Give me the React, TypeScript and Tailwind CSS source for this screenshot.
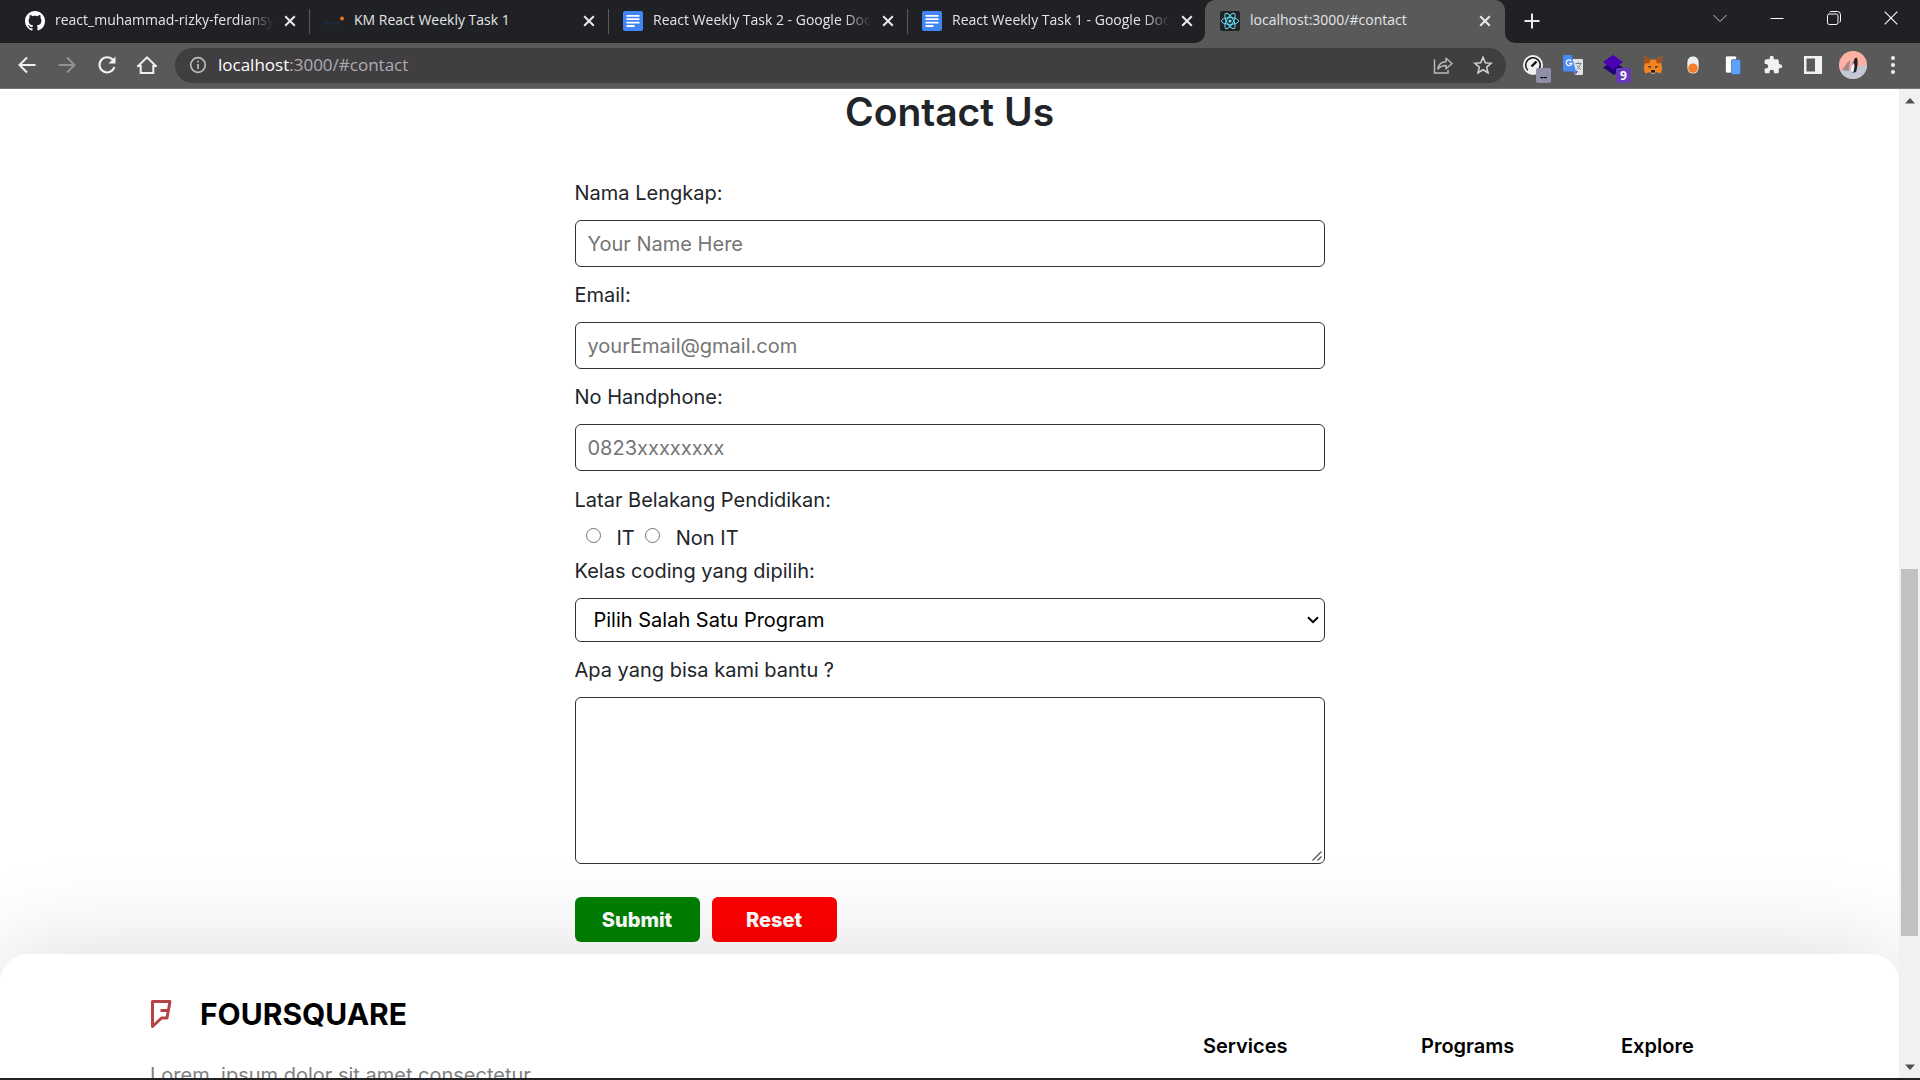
import type { ReactNode } from "react";

function GithubIcon() {
  return (
    <svg viewBox="0 0 16 16" className="size-5 shrink-0" fill="#fff" aria-hidden="true">
      <path d="M8 0C3.58 0 0 3.58 0 8c0 3.54 2.29 6.53 5.47 7.59.4.07.55-.17.55-.38 0-.19-.01-.82-.01-1.49-2.01.37-2.53-.49-2.69-.94-.09-.23-.48-.94-.82-1.13-.28-.15-.68-.52-.01-.53.63-.01 1.08.58 1.23.82.72 1.21 1.87.87 2.33.66.07-.52.28-.87.51-1.07-1.78-.2-3.64-.89-3.64-3.95 0-.87.31-1.59.82-2.15-.08-.2-.36-1.02.08-2.12 0 0 .67-.21 2.2.82.64-.18 1.32-.27 2-.27s1.36.09 2 .27c1.53-1.04 2.2-.82 2.2-.82.44 1.1.16 1.92.08 2.12.51.56.82 1.27.82 2.15 0 3.07-1.87 3.75-3.65 3.95.29.25.54.73.54 1.48 0 1.07-.01 1.93-.01 2.2 0 .21.15.46.55.38A8.01 8.01 0 0 0 16 8c0-4.42-3.58-8-8-8z" />
    </svg>
  );
}

function CampusIcon() {
  return (
    <svg viewBox="0 0 20 20" className="size-5 shrink-0" aria-hidden="true">
      <path d="M0 11.5h16M1 13h13" stroke="#1b2f55" strokeWidth="1.2" strokeDasharray="2 .6" />
      <circle cx="18" cy="7.6" r="2" fill="#f36f21" />
    </svg>
  );
}

function DocsIcon() {
  return (
    <svg viewBox="0 0 20 20" className="size-5 shrink-0" aria-hidden="true">
      <rect width="20" height="20" rx="2" fill="#4285f4" />
      <path d="M3.5 4.8h13M3.5 8.2h13M3.5 11.6h13M3.5 15h8" stroke="#fff" strokeWidth="1.8" />
    </svg>
  );
}

function ReactIcon() {
  return (
    <svg viewBox="0 0 20 20" className="size-5 shrink-0" aria-hidden="true">
      <rect width="20" height="20" rx="2" fill="#222" />
      <circle cx="10" cy="10" r="1.6" fill="#61dafb" />
      <g fill="none" stroke="#61dafb" strokeWidth="1">
        <ellipse cx="10" cy="10" rx="8.6" ry="3.4" />
        <ellipse cx="10" cy="10" rx="8.6" ry="3.4" transform="rotate(60 10 10)" />
        <ellipse cx="10" cy="10" rx="8.6" ry="3.4" transform="rotate(120 10 10)" />
      </g>
    </svg>
  );
}

type TabProps = { icon: ReactNode; title: string; active?: boolean; divider?: boolean; fade?: boolean };

function Tab({ icon, title, active, divider, fade }: TabProps) {
  return (
    <div
      className={
        active
          ? "relative -ml-0.5 flex h-full w-[300px] min-w-0 items-center rounded-t-[10px] bg-[#595959] pr-[14px] pb-px pl-[15px]"
          : "relative flex h-full w-[299px] min-w-0 items-center pr-[14px] pb-px pl-[14px]"
      }
    >
      {icon}
      <span
        className={
          fade
            ? "ml-[10px] min-w-0 flex-1 overflow-hidden pb-0.5 whitespace-nowrap [mask-image:linear-gradient(to_right,#000_88%,transparent)]"
            : "ml-[10px] min-w-0 flex-1 overflow-hidden pb-0.5 whitespace-nowrap"
        }
      >
        {title}
      </span>
      <button type="button" aria-label={`Close ${title}`} className="ml-[10px] flex w-[13px] justify-center">
        <svg viewBox="0 0 12 12" className="size-3" stroke="#e8eaed" strokeWidth="2" aria-hidden="true">
          <path d="M1.2 1.2l9.6 9.6M10.8 1.2L1.2 10.8" />
        </svg>
      </button>
      {divider && <span className="absolute top-[9px] right-0 h-[25px] w-px bg-[#5a5b5e]" />}
      {active && (
        <>
          <svg viewBox="0 0 10 10" className="absolute bottom-0 -left-[10px] size-[10px]" fill="#595959" aria-hidden="true">
            <path d="M10 0v10H0A10 10 0 0 0 10 0z" />
          </svg>
          <svg viewBox="0 0 10 10" className="absolute -right-[10px] bottom-0 size-[10px]" fill="#595959" aria-hidden="true">
            <path d="M0 0v10h10A10 10 0 0 1 0 0z" />
          </svg>
        </>
      )}
    </div>
  );
}

function TabStrip() {
  return (
    <div className="flex h-[43px] items-stretch bg-[#202124] pl-[11px] text-sm leading-5 text-[#e3e5e8]">
      <Tab icon={<GithubIcon />} title="react_muhammad-rizky-ferdiansyah" divider fade />
      <Tab icon={<CampusIcon />} title="KM React Weekly Task 1" divider />
      <Tab icon={<DocsIcon />} title="React Weekly Task 2 - Google Docs" divider fade />
      <Tab icon={<DocsIcon />} title="React Weekly Task 1 - Google Docs" fade />
      <Tab icon={<ReactIcon />} title="localhost:3000/#contact" active />
      <button type="button" aria-label="New tab" className="ml-[18px] flex w-[18px] items-center justify-center pb-px">
        <svg viewBox="0 0 16 16" className="size-4" stroke="#e8eaed" strokeWidth="2" aria-hidden="true">
          <path d="M8 .5v15M.5 8h15" />
        </svg>
      </button>
      <div className="ml-auto flex h-9 shrink-0 items-center pr-px">
        <button type="button" aria-label="Search tabs" className="flex w-[57px] justify-center">
          <svg viewBox="0 0 14 14" className="size-[14px]" stroke="#c9cacc" fill="none" aria-hidden="true">
            <path d="M.5 4L7 10.5 13.5 4" />
          </svg>
        </button>
        <button type="button" aria-label="Minimize" className="flex w-[57px] justify-center">
          <svg viewBox="0 0 14 14" className="size-[14px]" stroke="#fff" fill="none" aria-hidden="true">
            <path d="M.5 7.5h13" />
          </svg>
        </button>
        <button type="button" aria-label="Restore" className="flex w-[57px] justify-center">
          <svg viewBox="0 0 14 14" className="size-[14px]" stroke="#fff" fill="none" aria-hidden="true">
            <rect x=".5" y="3" width="10.5" height="10.5" rx="1.8" />
            <path d="M2.5 1.2c.4-.5 1-.7 1.6-.7h6.2a3.2 3.2 0 0 1 3.2 3.2v6.2c0 .7-.3 1.3-.8 1.6" />
          </svg>
        </button>
        <button type="button" aria-label="Close window" className="flex w-[57px] justify-center">
          <svg viewBox="0 0 14 14" className="size-[14px]" stroke="#fff" strokeWidth="1.1" fill="none" aria-hidden="true">
            <path d="M.7.7l12.6 12.6M13.3.7L.7 13.3" />
          </svg>
        </button>
      </div>
    </div>
  );
}

function ToolButton({ label, children }: { label: string; children: ReactNode }) {
  return (
    <button type="button" aria-label={label} className="relative flex w-10 shrink-0 items-center justify-center">
      {children}
    </button>
  );
}

function Toolbar() {
  return (
    <div className="flex h-[46px] items-center border-b border-[#757575] bg-[#595959] pb-px pl-[7px]">
      <ToolButton label="Back">
        <svg viewBox="0 0 20 20" className="size-5" stroke="#f1f1f1" strokeWidth="2" fill="none">
          <path d="M18.5 10H3M10 2.5L2.5 10l7.5 7.5" />
        </svg>
      </ToolButton>
      <ToolButton label="Forward">
        <svg viewBox="0 0 20 20" className="size-5" stroke="#929292" strokeWidth="2" fill="none">
          <path d="M1.5 10H17M10 2.5l7.5 7.5-7.5 7.5" />
        </svg>
      </ToolButton>
      <ToolButton label="Reload">
        <svg viewBox="0 0 20 20" className="size-5" stroke="#f1f1f1" strokeWidth="2.1" fill="none">
          <path d="M16 5A7.6 7.6 0 1 0 17.4 12" />
          <path d="M18.5 1.5v7h-7z" fill="#f1f1f1" stroke="none" />
        </svg>
      </ToolButton>
      <ToolButton label="Home">
        <svg viewBox="0 0 20 20" className="size-5" stroke="#f1f1f1" strokeWidth="2" fill="none">
          <path d="M1.2 11L10 2.4l8.8 8.6h-2.5v7H3.7v-7z" />
        </svg>
      </ToolButton>
      <div className="ml-2 flex h-[35px] min-w-0 flex-1 items-center rounded-full bg-[#403e41] pr-[13px] pl-[14px]">
        <svg viewBox="0 0 18 18" className="size-[18px] shrink-0" stroke="#b9b9bb" strokeWidth="1.7" fill="none" aria-hidden="true">
          <circle cx="9" cy="9" r="7.3" />
          <path d="M9 8v5M9 4.8v1.8" />
        </svg>
        <span className="ml-[11px] flex-1 text-[17px] leading-6 whitespace-nowrap text-[#adadaf]">
          <span className="text-white">localhost</span>:3000/#contact
        </span>
        <button type="button" aria-label="Share" className="mr-5">
          <svg viewBox="0 0 20 20" className="size-5" stroke="#b9b9bb" strokeWidth="1.5" fill="none">
            <path d="M1.5 4.500v13.500h13.500V15" />
            <path d="M5 14c.4-4.5 3-7 8-7.2V3.200L19 8.500l-6 5.200V10.500c-3.600 0-6 1.200-8 3.500z" strokeLinejoin="round" />
          </svg>
        </button>
        <button type="button" aria-label="Bookmark">
          <svg viewBox="0 0 20 20" className="size-5" stroke="#cfcfd1" strokeWidth="1.6" fill="none">
            <path d="M10 2.4l2.3 5.4 5.8.5-4.4 3.8 1.3 5.700-5-3-5 3 1.300-5.700L1.900 8.300l5.800-.5z" />
          </svg>
        </button>
      </div>
      <div className="ml-[7px] flex shrink-0 items-center pr-[7px]">
        <ToolButton label="Performance monitor">
          <svg viewBox="0 0 28 28" className="size-7">
            <circle cx="14" cy="14" r="10" fill="#f1f1f1" />
            <path d="M8.8 19.2a7.300 7.300 0 1 1 11.200-1" fill="none" stroke="#111" strokeWidth="1.5" />
            <path d="M12.500 15.500l5-5" stroke="#111" strokeWidth="2.400" />
          </svg>
          <span className="absolute top-[17px] left-[23px] flex h-[15px] w-[15px] items-center justify-center rounded-[2px] bg-[#8f90a8] text-[11px] leading-3 font-bold text-black">
            --
          </span>
        </ToolButton>
        <ToolButton label="Translate">
          <svg viewBox="0 0 20 20" className="size-5">
            <path d="M9 4h10a1 1 0 0 1 1 1v14a1 1 0 0 1-1 1h-7z" fill="#dfe3e6" />
            <path d="M12 16h3l-2.500 4z" fill="#3a53c5" />
            <path d="M12.500 8.500h6M15.500 7v1.500M17.500 8.500c-.5 3-2.500 5-4 6M14 10.500c1 2 2.500 3 4 4" stroke="#6d8593" fill="none" />
            <path d="M1 0h7.500l4.500 16.500H1a1 1 0 0 1-1-1V1a1 1 0 0 1 1-1z" fill="#4a8af4" />
            <path d="M8.300 6.100a2.800 2.800 0 1 0 .5 2.200H6.200" fill="none" stroke="#fff" strokeWidth="1.300" />
          </svg>
        </ToolButton>
        <ToolButton label="Layers">
          <svg viewBox="0 0 20 20" className="size-5">
            <path d="M0 12.500L10 6l10 6.500L11 20z" fill="#21007a" />
            <path d="M0 7l10-7 10 7-10 7.500z" fill="#4a00b4" />
          </svg>
          <span className="absolute top-[13px] left-[23px] flex h-[15px] w-[15px] items-center justify-center rounded-[2px] bg-[#673ab7] text-[12px] leading-3 font-bold text-white">
            9
          </span>
        </ToolButton>
        <ToolButton label="Wallet">
          <svg viewBox="0 0 20 20" className="size-5">
            <path d="M.8 1l6.700 3.500h5L19.200 1l-1 7 1 5.500-1.500 5-5-1.500-1.500 1.500h-2.400L7.300 17l-5 1.500-1.500-5 1-5.500z" fill="#f5841f" />
            <path d="M.8 1l6.700 3.500L6 8.500 1.500 8zM19.200 1l-6.700 3.500L14 8.500l4.500-.5z" fill="#a2531c" />
            <path d="M4.500 11l3.500.3-.5 2.200zM15.500 11l-3.500.3.500 2.200z" fill="#233447" />
            <path d="M8 16.500l.5-1.500h3l.5 1.500-1 1.800H9z" fill="#1c1714" />
            <path d="M7.500 17.800h5l-1.300 1H8.800z" fill="#c8bdb5" />
          </svg>
        </ToolButton>
        <ToolButton label="Toggle">
          <svg viewBox="0 0 20 20" className="size-5">
            <rect x="4" y="1" width="12" height="18" rx="6" fill="#eee" stroke="#444" strokeWidth=".6" />
            <circle cx="10" cy="13.200" r="4.800" fill="#f57c2c" />
          </svg>
        </ToolButton>
        <ToolButton label="Devices">
          <svg viewBox="0 0 20 20" className="size-5">
            <rect x="2.500" y="1" width="11" height="17" rx="1.500" fill="#fff" stroke="#3c4657" strokeWidth=".6" />
            <rect x="8.500" y="4.500" width="9" height="15" rx="1.500" fill="#5ea3fa" stroke="#3b5f99" strokeWidth=".6" />
          </svg>
        </ToolButton>
        <ToolButton label="Extensions">
          <svg viewBox="0 0 24 24" className="size-5" fill="#f1f1f1">
            <path d="M20.500 11H19V7c0-1.100-.9-2-2-2h-4V3.500a2.500 2.500 0 0 0-5 0V5H4c-1.100 0-2 .9-2 2v3.800h1.500a2.700 2.700 0 0 1 0 5.400H2V20c0 1.100.9 2 2 2h3.800v-1.500a2.700 2.700 0 0 1 5.400 0V22H17c1.100 0 2-.9 2-2v-4h1.500a2.500 2.500 0 0 0 0-5z" />
          </svg>
        </ToolButton>
        <ToolButton label="Side panel">
          <svg viewBox="0 0 18 18" className="size-[18px]">
            <rect width="18" height="18" fill="#f1f1f1" />
            <rect x="2.500" y="2.500" width="8.500" height="13" fill="#595959" />
          </svg>
        </ToolButton>
        <ToolButton label="Profile">
          <svg viewBox="0 0 28 28" className="size-7">
            <clipPath id="avatar">
              <circle cx="14" cy="14" r="14" />
            </clipPath>
            <g clipPath="url(#avatar)">
              <rect width="28" height="28" fill="#fbb1a4" />
              <path d="M0 20l28-6v14H0z" fill="#c3c8d8" />
              <path d="M3 19c3-3 5-9 8-9l-1 10z" fill="#a48a8a" />
              <path d="M13 22c-1-5 0-9 2-12 0-3 2-4 3-3 1 2 1 8-1 14z" fill="#222" />
              <path d="M12 20c0-4 1-7 3-8 1 3 0 7-1 10z" fill="#f4f4f4" />
            </g>
          </svg>
        </ToolButton>
        <ToolButton label="Menu">
          <svg viewBox="0 0 4 18" className="h-[18px] w-1" fill="#f1f1f1">
            <circle cx="2" cy="2" r="2" />
            <circle cx="2" cy="9" r="2" />
            <circle cx="2" cy="16" r="2" />
          </svg>
        </ToolButton>
      </div>
    </div>
  );
}

const labelClass = "mb-3 block leading-[30px]";
const boxClass = "block w-full rounded-[6px] border border-[#2f3133] bg-white outline-none";

function TextField({ id, label, type, placeholder }: { id: string; label: string; type: string; placeholder: string }) {
  return (
    <div className="mb-[13px]">
      <label htmlFor={id} className={labelClass}>
        {label}
      </label>
      <input id={id} type={type} placeholder={placeholder} className={`${boxClass} h-[47px] px-3 placeholder:text-[#757575]`} />
    </div>
  );
}

function ContactForm() {
  return (
    <section className="text-[20px] text-[#212529]">
      <h2 className="mb-[43px] text-center text-[39px] leading-[46px] font-semibold">Contact Us</h2>
      <form className="mx-auto w-full max-w-[750px]">
        <TextField id="name" label="Nama Lengkap:" type="text" placeholder="Your Name Here" />
        <TextField id="email" label="Email:" type="email" placeholder="yourEmail@gmail.com" />
        <TextField id="phone" label="No Handphone:" type="tel" placeholder="0823xxxxxxxx" />
        <fieldset>
          <legend className="pt-px leading-[30px]">Latar Belakang Pendidikan:</legend>
          <div className="flex h-[41px] items-center gap-[10px] pt-1 pl-[11px]">
            <label className="flex items-center gap-4">
              <input type="radio" name="background" className="mb-[5px] size-[15px] appearance-none rounded-full border border-[#767676]" />
              IT
            </label>
            <label className="flex items-center gap-4">
              <input type="radio" name="background" className="mb-[5px] size-[15px] appearance-none rounded-full border border-[#767676]" />
              Non IT
            </label>
          </div>
        </fieldset>
        <div className="mb-[13px]">
          <label htmlFor="program" className={labelClass}>
            Kelas coding yang dipilih:
          </label>
          <div className="relative">
            <select id="program" className={`${boxClass} h-11 appearance-none px-[18px] text-black`}>
              <option>Pilih Salah Satu Program</option>
            </select>
            <svg viewBox="0 0 12 8" className="pointer-events-none absolute top-[18px] right-[6px] h-2 w-3" fill="none" stroke="#000" strokeWidth="2" aria-hidden="true">
              <path d="M1 1.200l5 5 5-5" />
            </svg>
          </div>
        </div>
        <label htmlFor="message" className={labelClass}>
          Apa yang bisa kami bantu ?
        </label>
        <div className="relative">
          <textarea id="message" className={`${boxClass} h-[167px] resize-y px-3 py-2 [&::-webkit-resizer]:bg-transparent`} />
          <svg viewBox="0 0 10 10" className="pointer-events-none absolute right-[3px] bottom-[3px] size-[10px]" fill="none" stroke="#555" strokeWidth="1.300" aria-hidden="true">
            <path d="M.5 9.500l9-9M5.500 9.500l4-4" />
          </svg>
        </div>
        <div className="mt-[33px] mb-3 flex gap-3 font-extrabold text-white">
          <button type="submit" className="h-[45px] w-[125px] rounded-[6px] bg-[#008000]">
            Submit
          </button>
          <button type="reset" className="h-[45px] w-[125px] rounded-[6px] bg-[#ff0000]">
            Reset
          </button>
        </div>
      </form>
    </section>
  );
}

function Footer() {
  return (
    <footer className="grid flex-1 grid-cols-[1053fr_218fr_200fr_128fr] rounded-t-[28px] bg-white px-[150px] pt-10 text-[20px] shadow-[0_0_100px_rgba(0,0,0,0.15)]">
      <div>
        <div className="flex items-center gap-7">
          <svg viewBox="0 0 22 30" className="h-[30px] w-[22px]" fill="none" stroke="#b54545" strokeWidth="3" strokeLinejoin="round" aria-hidden="true">
            <path d="M2.500 2.500h17.500l-3 16.500h-5.500L2.500 27.500z" />
            <path d="M18 11.500H10.500" />
          </svg>
          <span className="text-[30px] leading-10 font-bold text-black">FOURSQUARE</span>
        </div>
        <p className="mt-[26px] leading-[30px] whitespace-nowrap text-[#808080]">Lorem, ipsum dolor sit amet consectetur</p>
      </div>
      <h3 className="mt-[37px] leading-[30px] font-semibold text-black">Services</h3>
      <h3 className="mt-[37px] leading-[30px] font-semibold text-black">Programs</h3>
      <h3 className="mt-[37px] leading-[30px] font-semibold text-black">Explore</h3>
    </footer>
  );
}

function Scrollbar() {
  return (
    <div className="flex w-[21px] shrink-0 flex-col items-center bg-[#f1f1f1]" aria-hidden="true">
      <svg viewBox="0 0 10 6" className="mt-[9px] h-[6px] w-[10px]" fill="#505050">
        <path d="M0 5.500L5 0l5 5.500z" />
      </svg>
      <div className="grow-[465]" />
      <div className="w-[17px] grow-[367] bg-[#c1c1c1]" />
      <div className="grow-[128]" />
      <svg viewBox="0 0 10 6" className="mb-[8px] h-[6px] w-[10px]" fill="#505050">
        <path d="M0 .5L5 6l5-5.500z" />
      </svg>
    </div>
  );
}

export default function App() {
  return (
    <div className="flex h-screen flex-col overflow-hidden bg-white">
      <header className="shrink-0 font-['Open_Sans',sans-serif]">
        <TabStrip />
        <Toolbar />
      </header>
      <div className="flex min-h-0 flex-1 border-b-2 border-[#202124]">
        <main className="flex min-w-0 flex-1 flex-col overflow-hidden font-['Inter',sans-serif]">
          <ContactForm />
          <Footer />
        </main>
        <Scrollbar />
      </div>
    </div>
  );
}
